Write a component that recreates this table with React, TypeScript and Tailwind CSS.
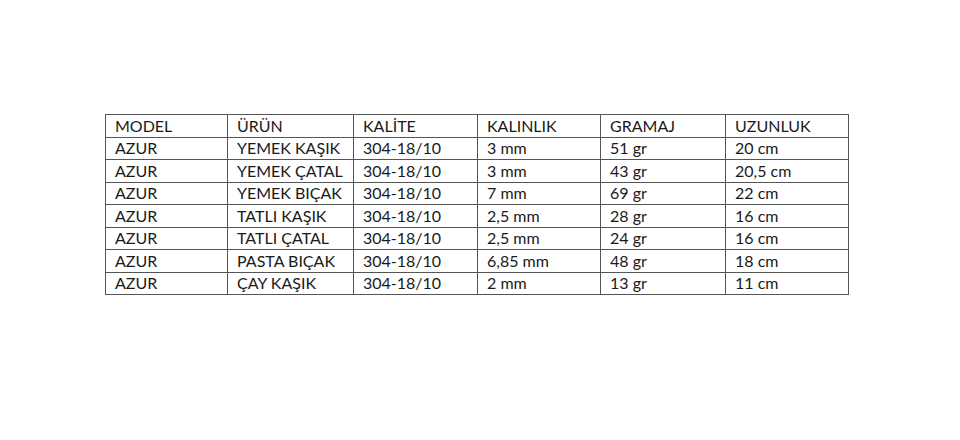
const headers = ["MODEL", "ÜRÜN", "KALİTE", "KALINLIK", "GRAMAJ", "UZUNLUK"]

const rows = [
  ["AZUR", "YEMEK KAŞIK", "304-18/10", "3 mm", "51 gr", "20 cm"],
  ["AZUR", "YEMEK ÇATAL", "304-18/10", "3 mm", "43 gr", "20,5 cm"],
  ["AZUR", "YEMEK BIÇAK", "304-18/10", "7 mm", "69 gr", "22 cm"],
  ["AZUR", "TATLI KAŞIK", "304-18/10", "2,5 mm", "28 gr", "16 cm"],
  ["AZUR", "TATLI ÇATAL", "304-18/10", "2,5 mm", "24 gr", "16 cm"],
  ["AZUR", "PASTA BIÇAK", "304-18/10", "6,85 mm", "48 gr", "18 cm"],
  ["AZUR", "ÇAY KAŞIK", "304-18/10", "2 mm", "13 gr", "11 cm"],
]

const widths = ["w-[122px]", "w-[126px]", "w-[124px]", "w-[123px]", "w-[125px]", "w-[123px]"]

export default function App() {
  return (
    <div className="w-[960px] h-[440px] bg-white pt-[114px] pl-[105px] font-['Lato','Liberation_Sans',sans-serif] text-[16px] text-[#1a1a1a]">
      <table className="border-collapse table-fixed">
        <tbody>
          <tr className="h-[22.5px]">
            {headers.map((h, i) => (
              <td key={h} className={`${widths[i]} border border-[#555] px-[9px] py-0 leading-[20px]`}>
                {h}
              </td>
            ))}
          </tr>
          {rows.map((r, ri) => (
            <tr key={ri} className="h-[22.5px]">
              {r.map((c, ci) => (
                <td key={ci} className={`${widths[ci]} border border-[#555] px-[9px] py-0 leading-[20px]`}>
                  {c}
                </td>
              ))}
            </tr>
          ))}
        </tbody>
      </table>
    </div>
  )
}
